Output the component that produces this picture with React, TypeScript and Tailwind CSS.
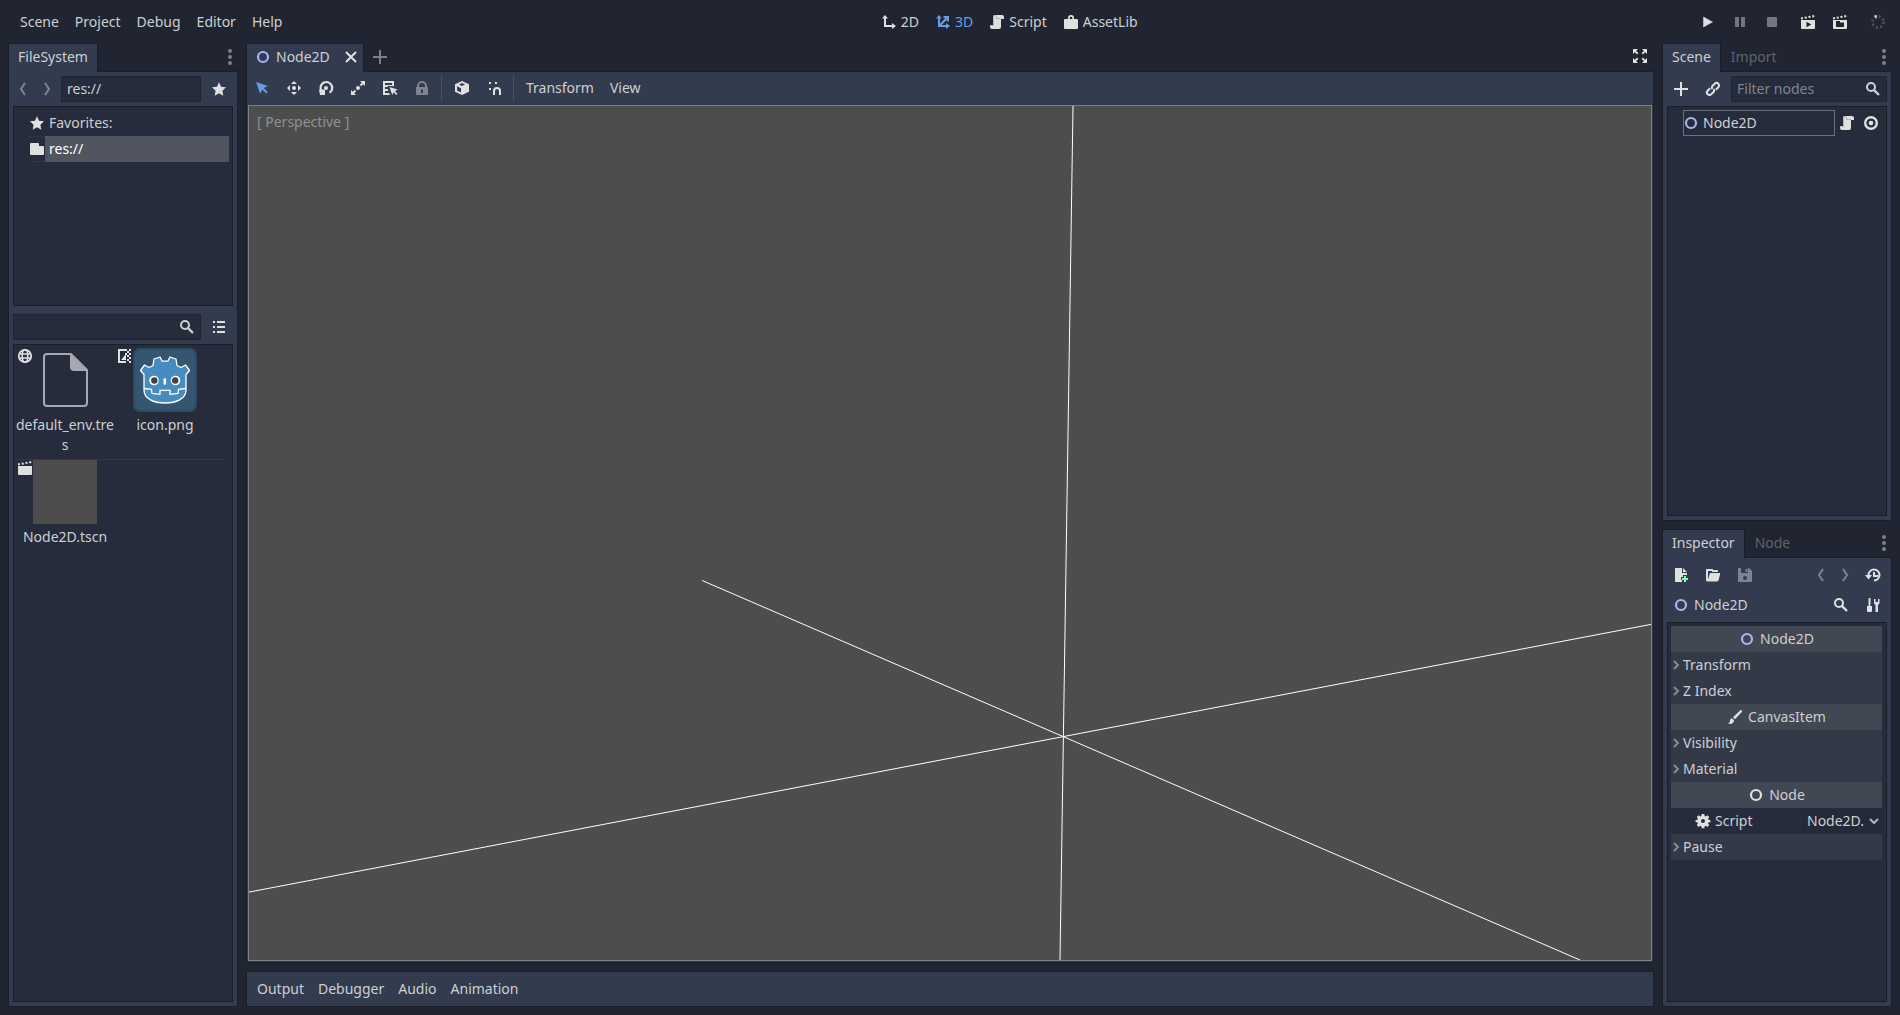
import React, { useState } from "react";
import { clsx } from "clsx";

interface IconProps {
  children: React.ReactNode;
  className?: string;
}

/** Every editor icon lives on a 16px grid and inherits the text colour. */
function Icon({ children, className }: IconProps): React.ReactElement {
  return (
    <svg
      viewBox="0 0 16 16"
      fill="currentColor"
      aria-hidden="true"
      className={clsx("h-4 w-4 shrink-0", className)}
    >
      {children}
    </svg>
  );
}

const STROKE = { fill: "none", stroke: "currentColor", strokeWidth: 2 } as const;

const SLATE_TOP =
  "M14 1l-2 .4.4 2 2-.4zM10.3 1.7l-2 .3.4 2 2-.3zM6.5 2.4l-2 .3.4 2 2-.3zM2.8 3l-2 .4.4 2 2-.4z";

const SHAPES = {
  ring: <circle cx="8" cy="8" r="5" {...STROKE} strokeWidth={2.2} />,
  close: <path d="M3 3l10 10M13 3L3 13" {...STROKE} />,
  plus: <path d="M7 1v6H1v2h6v6h2V9h6V7H9V1z" />,
  dots: (
    <>
      <circle cx="8" cy="2" r="2" />
      <circle cx="8" cy="8" r="2" />
      <circle cx="8" cy="14" r="2" />
    </>
  ),
  back: <path d="M10 2L6 8l4 6" {...STROKE} />,
  forward: <path d="M6 2l4 6-4 6" {...STROKE} />,
  star: <path d="M8 1.2l2 4.5 5 .6-3.6 3.4.9 5L8 12.3l-4.3 2.4.9-5L1 6.300l5-.6z" />,
  folder: <path d="M2 2a1 1 0 0 0-1 1v10a1 1 0 0 0 1 1h12a1 1 0 0 0 1-1V6a1 1 0 0 0-1-1h-4V3a1 1 0 0 0-1-1z" />,
  search: (
    <>
      <circle cx="6" cy="6" r="4" {...STROKE} />
      <path d="M8.8 8.8L14 14" {...STROKE} strokeWidth={2.4} />
    </>
  ),
  list: <path d="M2 2v2h2V2zm4 0v2h8V2zM2 7v2h2V7zm4 0v2h8V7zM2 12v2h2v-2zm4 0v2h8v-2z" />,
  view2d: <path d="M4 1L1 4.5h2V13h8v2l4-3-4-3v2H5V4.5h2z" />,
  view3d: <path d="M4 1L1 4.5h2V13h8v2l4-3-4-3v2H6.6L12 5.7V7.5h2V2H8.5v2h1.9L5 9.4V4.5h2z" />,
  script: (
    <>
      <path d="M6 1a2 2 0 0 0-2 2v8H1v2a2 2 0 0 0 2 2h7a2 2 0 0 0 2-2V5h3V3a2 2 0 0 0-2-2z" />
      <path d="M6 1a2 2 0 0 0-2 2v8H1v1h4V3a1 1 0 0 1 2 0v2h5V4H8V3a2 2 0 0 0-2-2z" fill="#b4b4b4" />
    </>
  ),
  assetLib: (
    <path
      fillRule="evenodd"
      d="M8 1a3 3 0 0 0-3 3v1H2a1 1 0 0 0-1 1v8a1 1 0 0 0 1 1h12a1 1 0 0 0 1-1V6a1 1 0 0 0-1-1h-3V4a3 3 0 0 0-3-3zm0 1.700A1.300 1.300 0 0 1 9.300 4v1H6.700V4A1.300 1.300 0 0 1 8 2.700z"
    />
  ),
  play: <path d="M3.500 3v10l9-5z" strokeLinejoin="round" stroke="currentColor" strokeWidth="0.5" />,
  pause: <path d="M3 3h4v10H3zM9 3h4v10H9z" />,
  stop: <rect x="3" y="3" width="10" height="10" rx="1" />,
  playScene: (
    <>
      <path d={SLATE_TOP} />
      <path fillRule="evenodd" d="M1 6v8a1 1 0 0 0 1 1h12a1 1 0 0 0 1-1V6zm5.500 1.700l4.800 2.800-4.800 2.800z" />
    </>
  ),
  playCustom: (
    <>
      <path d={SLATE_TOP} />
      <path fillRule="evenodd" d="M1 6v8a1 1 0 0 0 1 1h12a1 1 0 0 0 1-1V6zm3 1h4v1.500h4V13H4z" />
    </>
  ),
  clapper: (
    <>
      <path d={SLATE_TOP} />
      <path d="M1 6v8a1 1 0 0 0 1 1h12a1 1 0 0 0 1-1V6z" />
    </>
  ),
  spinner: (
    <>
      <circle cx="8" cy="8" r="5.500" {...STROKE} strokeWidth={3} strokeDasharray="2 2.320" opacity="0.22" />
      <path d="M4 1.700l2.500-1 .3 3.300-1 .5z" />
    </>
  ),
  expand: (
    <path d="M1 1v5l1.800-1.800L5 6.400 6.400 5 4.200 2.800 6 1zm9 0l1.800 1.800L9.600 5 11 6.400l2.200-2.200L15 6V1zM5 9.600l-2.200 2.200L1 10v5h5l-1.800-1.800L6.400 11zm6 0L9.600 11l2.200 2.200L10 15h5v-5l-1.800 1.800z" />
  ),
  select: <path d="M2 2l4.200 11.800 2.100-4.300 4 4 1.400-1.400-4-4L14 6z" />,
  move: (
    <>
      <path d="M8 1L5 4h6zM8 15l-3-3h6zM1 8l3-3v6zM15 8l-3-3v6z" />
      <circle cx="8" cy="8" r="2" />
    </>
  ),
  rotate: (
    <>
      <path d="M3.200 10.500A5.800 5.800 0 1 1 11.500 12.700" {...STROKE} strokeWidth={2.200} />
      <path d="M1 9.500h6V15H2z" />
      <circle cx="8" cy="8" r="2" />
    </>
  ),
  scale: (
    <>
      <path d="M10 1l1.800 1.800-2 2 1.400 1.400 2-2L15 6V1zM1 10v5h5l-1.800-1.800 2-2-1.400-1.400-2 2z" />
      <circle cx="8" cy="8" r="2" />
    </>
  ),
  listSelect: (
    <>
      <path d="M1 1v14h7l-.8-2H3v-2h3.400L5.700 9H3V7h2.500L6 6h4.500L12 6.500V1zm2 2h7v2H3z" fillRule="evenodd" />
      <path d="M7.500 7l2.700 8 1.500-2.700 2.600 2.700 1.200-1.200-2.600-2.600L15.700 9.600z" />
    </>
  ),
  lock: (
    <path
      fillRule="evenodd"
      d="M8 1a5 5 0 0 0-5 5v1H2v7a1 1 0 0 0 1 1h10a1 1 0 0 0 1-1V7h-1V6a5 5 0 0 0-5-5zm0 2a3 3 0 0 1 3 3v1H5V6a3 3 0 0 1 3-3zM7 9.500h2V13H7z"
    />
  ),
  cube: (
    <path
      fillRule="evenodd"
      d="M8 .9L1 4.200v7.600l7 3.300 7-3.300V4.200zM8 3.100l3 1.400-3 1.500-3-1.500zM3 6.300l4 1.900v4.300l-4-1.900z"
    />
  ),
  snap: (
    <>
      <path d="M3 2h2v2H3zM9 2h2v2H9zM3 8h2v2H3z" />
      <path d="M8 15v-4a3 3 0 0 1 6 0v4" {...STROKE} />
    </>
  ),
  link: (
    <g transform="rotate(-45 8 8)" {...STROKE}>
      <path d="M6.500 5.500H3a2.500 2.500 0 0 0 0 5h3a2.500 2.500 0 0 0 2.400-2" />
      <path d="M9.500 10.500H13a2.500 2.500 0 0 0 0-5h-3a2.500 2.500 0 0 0-2.400 2" />
    </g>
  ),
  eye: (
    <>
      <circle cx="8" cy="8" r="5.800" {...STROKE} strokeWidth={2.400} />
      <circle cx="8" cy="8" r="2.300" />
    </>
  ),
  fileNew: (
    <>
      <path d="M2 1v14h7v-2H8v-3h2V8h4V6H9V1z" />
      <path d="M10 1v4h4z" />
      <path d="M11 9v2H9v2h2v2h2v-2h2v-2h-2V9z" fill="#84ffb1" />
    </>
  ),
  load: (
    <path d="M2 2a1 1 0 0 0-1 1v10a1.500 1.500 0 0 0 1.500 1.500H12l1.500-1L15 7.500V6H5L3 12.500V4h4v1h6V4a1 1 0 0 0-1-1H8V2z" />
  ),
  save: (
    <path
      fillRule="evenodd"
      d="M1 2v12a1 1 0 0 0 1 1h12a1 1 0 0 0 1-1V4l-3-3H2a1 1 0 0 0-1 1zm3-1h7v5H4zm4 8a2 2 0 1 1 0 4 2 2 0 0 1 0-4zM8.500 2h2v3h-2z"
    />
  ),
  history: (
    <>
      <path d="M3.500 8A5.500 5.500 0 1 1 9 13.500" {...STROKE} />
      <path d="M0 8h7l-3.500 4.500zM8 5h2v3h3v2H8z" />
    </>
  ),
  tools: (
    <path d="M4 1h1.500v6h-.2v2H7v5a1 1 0 0 1-1 1H3a1 1 0 0 1-1-1V9h1.500V2zM9 2v3.500A2.500 2.500 0 0 0 10.500 8v7h2.500V8a2.500 2.500 0 0 0 1.500-2.500V2H13v3h-2.500V2z" />
  ),
  brush: (
    <path d="M14.800 1.200c-.5-.5-1.200-.3-1.800.3L6 8.200 8 10.200l6.500-7c.6-.7.800-1.500.3-2zM5 9.200a2.500 2.500 0 0 0-2 2.300C3 13 2 14 1 14.500c2.500 1 6 .2 6-3.300z" />
  ),
  gear: (
    <path
      fillRule="evenodd"
      d="M6.700 1h2.600l.4 2 1 .4 1.700-1.100 1.800 1.800-1.100 1.700.4 1 2 .4v1.800l-2 .4-.4 1 1.100 1.700-1.800 1.800-1.700-1.100-1 .4-.4 2H6.700l-.4-2-1-.4-1.700 1.100-1.800-1.800 1.100-1.700-.4-1-2-.4V7.200l2-.4.4-1-1.100-1.700 1.800-1.800 1.700 1.100 1-.4zM8 6a2 2 0 1 0 0 4 2 2 0 0 0 0-4z"
    />
  ),
  sectionArrow: <path d="M6 4l4 4-4 4" {...STROKE} />,
  chevronDown: <path d="M4 6l4 4 4-4" {...STROKE} />,
  globe: (
    <>
      <circle cx="8" cy="8" r="6.200" {...STROKE} strokeWidth={1.800} />
      <ellipse cx="8" cy="8" rx="2.800" ry="6.200" {...STROKE} strokeWidth={1.600} />
      <path d="M2 6h12M2 10h12" {...STROKE} strokeWidth={1.600} />
    </>
  ),
  texture: (
    <>
      <path d="M1 1v14h8v-2H3V3h5V1z" />
      <path d="M4 12l5-6v6zM8 1h2v2H8zM12 1h2v2h-2zM10 3h2v2h-2zM12 5h2v2h-2zM8 5h2v2H8zM10 7h2v2h-2zM12 9h2v2h-2zM10 11h2v2h-2zM12 13h2v2h-2z" />
    </>
  ),
};

type IconName = keyof typeof SHAPES;

interface IconButtonProps {
  icon: IconName;
  label: string;
  narrow?: boolean;
  className?: string;
}

function IconButton({ icon, label, narrow, className }: IconButtonProps): React.ReactElement {
  return (
    <button
      type="button"
      aria-label={label}
      title={label}
      className={clsx(
        "flex h-[26px] shrink-0 items-center justify-center",
        narrow ? "w-5" : "w-7",
        className ?? "text-[#e0e0e0]",
      )}
    >
      <Icon>{SHAPES[icon]}</Icon>
    </button>
  );
}

function TextButton({ children }: { children: string }): React.ReactElement {
  return (
    <button type="button" className="h-[26px] px-[6px]">
      {children}
    </button>
  );
}

interface DockProps {
  tabs: string[];
  className?: string;
  children: React.ReactNode;
}

/** Dock with a tab strip; the open tab overlaps the panel's top border. */
function Dock({ tabs, className, children }: DockProps): React.ReactElement {
  const [active, setActive] = useState(tabs[0]);
  return (
    <section className={clsx("flex min-h-0 flex-col", className)}>
      <div className="flex h-7 shrink-0 items-stretch" role="tablist">
        {tabs.map((tab) => (
          <button
            key={tab}
            type="button"
            role="tab"
            aria-selected={tab === active}
            onClick={() => setActive(tab)}
            className={clsx(
              "z-10 -mb-px border border-b-0 px-[9px] pb-[2px]",
              tab === active
                ? "border-[#191e28] bg-[#333b4f]"
                : "border-transparent text-[#5d636d]",
            )}
          >
            {tab}
          </button>
        ))}
        <button type="button" aria-label="Dock menu" className="ml-auto text-[#7c8088]">
          <Icon>{SHAPES.dots}</Icon>
        </button>
      </div>
      <div className="flex min-h-0 flex-1 flex-col gap-1 border border-[#191e28] bg-[#333b4f] p-1">
        {children}
      </div>
    </section>
  );
}

function Inset({ className, children }: { className?: string; children?: React.ReactNode }) {
  return (
    <div className={clsx("min-h-0 border border-[#191e28] bg-[#262c3b]", className)}>{children}</div>
  );
}

const FIELD =
  "block h-[26px] w-full min-w-0 border border-[#202531] bg-[#262c3b] pb-px pl-[5px] leading-5 text-[#cdcfd2] outline-none placeholder:text-[#7f848e]";

function SearchField({ label, placeholder }: { label: string; placeholder?: string }) {
  return (
    <div className="relative min-w-0 flex-1">
      <input type="text" aria-label={label} placeholder={placeholder} className={clsx(FIELD, "pr-7")} />
      <Icon className="absolute top-[5px] right-[6px] text-[#cdcfd2]">{SHAPES.search}</Icon>
    </div>
  );
}

function GodotLogo(): React.ReactElement {
  return (
    <svg viewBox="0 0 64 64" className="h-16 w-16" role="img" aria-label="icon.png">
      <rect x="1" y="1" width="62" height="62" rx="6" fill="#355570" stroke="#2c4c64" strokeWidth="2" />
      <path
        d="M20 17.500l1-6.500 6-2 2.200 4.200h5.600L37 9l6 2 1 6.500 4 2 4.500-2.500 4 5.500-3.500 4V42c0 9-10 13-21 13S11 51 11 42V26.500l-3.500-4 4-5.500L16 19.500z"
        fill="#478cbf"
        stroke="#fff"
        strokeWidth="1.300"
        strokeLinejoin="round"
      />
      <path
        d="M11 40.500l7.500.8.5 4.200 8 .8v-4h10v4l8-.8.5-4.200 7.500-.8"
        fill="none"
        stroke="#fff"
        strokeWidth="1.300"
      />
      <circle cx="21" cy="32.500" r="4.800" fill="#fff" />
      <circle cx="42.500" cy="32.500" r="4.800" fill="#fff" />
      <circle cx="21.300" cy="32.500" r="3.200" fill="#414042" />
      <circle cx="42.200" cy="32.500" r="3.200" fill="#414042" />
      <path d="M31.800 31.500v4" stroke="#fff" strokeWidth="2.600" strokeLinecap="round" />
    </svg>
  );
}

function BlankFile(): React.ReactElement {
  return (
    <svg viewBox="0 0 64 64" className="h-16 w-16" aria-hidden="true">
      <path
        d="M14 6h24l16 16v33a3 3 0 0 1-3 3H14a3 3 0 0 1-3-3V9a3 3 0 0 1 3-3z"
        fill="none"
        stroke="#a6a9b0"
        strokeWidth="2"
      />
      <path d="M37 5.500V19a4 4 0 0 0 4 4h13z" fill="#a6a9b0" />
    </svg>
  );
}

const FILES: { name: string; icon: IconName; preview: React.ReactNode }[] = [
  { name: "default_env.tres", icon: "globe", preview: <BlankFile /> },
  { name: "icon.png", icon: "texture", preview: <GodotLogo /> },
  { name: "Node2D.tscn", icon: "clapper", preview: <div className="h-16 w-16 bg-[#4d4d4d]" /> },
];

function FileItem({ name, icon, preview }: (typeof FILES)[number]): React.ReactElement {
  return (
    <button type="button" className="relative flex w-[100px] flex-col items-center gap-[3px]">
      <Icon className="absolute top-0 left-[2px] text-[#e0e0e0]">{SHAPES[icon]}</Icon>
      {preview}
      <span className="w-full text-center break-all">{name}</span>
    </button>
  );
}

function FileSystemDock(): React.ReactElement {
  return (
    <Dock tabs={["FileSystem"]} className="w-[230px] shrink-0">
      <div className="flex gap-1">
        <IconButton icon="back" label="Previous" narrow className="text-[#7f8490]" />
        <IconButton icon="forward" label="Next" narrow className="text-[#7f8490]" />
        <input type="text" aria-label="Path" defaultValue="res://" className={clsx(FIELD, "flex-1")} />
        <IconButton icon="star" label="Favorite" />
      </div>
      <Inset className="h-[200px] shrink-0 py-[3px] pr-[3px] pl-[15px]">
        <ul>
          <li className="flex h-[26px] items-center gap-1">
            <Icon className="text-[#e0e0e0]">{SHAPES.star}</Icon>
            Favorites:
          </li>
          <li className="flex h-[26px] items-center border-y border-[#2f3542] text-white">
            <Icon className="text-[#e0e0e0]">{SHAPES.folder}</Icon>
            <span className="flex h-[26px] flex-1 items-center bg-[#51555f] pl-1">res://</span>
          </li>
        </ul>
      </Inset>
      <div className="mt-1 flex gap-1">
        <SearchField label="Search files" />
        <IconButton icon="list" label="Toggle display mode" />
      </div>
      <Inset className="flex-1 py-[3px] pr-[7px] pl-px">
        <div className="flex h-28 border-b border-[#333947]">
          <FileItem {...FILES[0]} />
          <FileItem {...FILES[1]} />
        </div>
        <FileItem {...FILES[2]} />
      </Inset>
    </Dock>
  );
}

const TOOLS: { icon: IconName; label: string }[] = [
  { icon: "move", label: "Move Mode" },
  { icon: "rotate", label: "Rotate Mode" },
  { icon: "scale", label: "Scale Mode" },
  { icon: "listSelect", label: "Select from list" },
];

function Separator(): React.ReactElement {
  return <div className="mr-[2px] ml-px h-[26px] w-px bg-[#4b5263]" />;
}

function Viewport(): React.ReactElement {
  return (
    <div className="relative min-h-0 flex-1 overflow-hidden border border-[#7a7f8a] bg-[#4d4d4d]">
      <svg
        viewBox="0 0 1402 855"
        preserveAspectRatio="none"
        className="absolute inset-0 h-full w-full"
        stroke="#fff"
        strokeWidth="1"
        shapeRendering="crispEdges"
        aria-hidden="true"
      >
        <path d="M824 0L811 855M453 475L1331 855M0 787L1402 519" fill="none" />
      </svg>
      <button type="button" className="absolute top-[6px] left-2 text-[#909090]">
        [ Perspective ]
      </button>
    </div>
  );
}

function MainEditor(): React.ReactElement {
  return (
    <main className="flex min-w-0 flex-1 flex-col gap-2">
      <section className="flex min-h-0 flex-1 flex-col">
        <div className="flex h-7 shrink-0 items-stretch">
          <div className="z-10 -mb-px flex items-center gap-[5px] border border-b-0 border-[#191e28] bg-[#333b4f] pr-1 pb-[2px] pl-2">
            <Icon className="text-[#a5b7f3]">{SHAPES.ring}</Icon>
            <span>Node2D</span>
            <button type="button" aria-label="Close scene" className="ml-2 text-[#e0e0e0]">
              <Icon>{SHAPES.close}</Icon>
            </button>
          </div>
          <button type="button" aria-label="Add a new scene" className="ml-2 text-[#7c8088]">
            <Icon>{SHAPES.plus}</Icon>
          </button>
          <IconButton icon="expand" label="Distraction free mode" className="ml-auto text-[#e0e0e0]" />
        </div>
        <div className="flex min-h-0 flex-1 flex-col border border-[#191e28] bg-[#333b4f] p-px pt-[3px]">
          <div className="mb-1 flex items-center gap-1">
            <IconButton icon="select" label="Select Mode" className="text-[#699ce8]" />
            {TOOLS.map((t) => (
              <IconButton key={t.label} {...t} />
            ))}
            <IconButton icon="lock" label="Lock" className="text-[#7f8490]" />
            <Separator />
            <IconButton icon="cube" label="Use local space" />
            <IconButton icon="snap" label="Use snap" />
            <Separator />
            <TextButton>Transform</TextButton>
            <TextButton>View</TextButton>
          </div>
          <Viewport />
        </div>
      </section>
      <div className="flex h-9 shrink-0 items-center gap-[2px] border border-[#191e28] bg-[#333b4f] px-1">
        {["Output", "Debugger", "Audio", "Animation"].map((name) => (
          <TextButton key={name}>{name}</TextButton>
        ))}
      </div>
    </main>
  );
}

function SceneDock(): React.ReactElement {
  return (
    <Dock tabs={["Scene", "Import"]} className="h-[478px] shrink-0">
      <div className="flex gap-1">
        <IconButton icon="plus" label="Add node" />
        <IconButton icon="link" label="Instance scene" />
        <SearchField label="Filter nodes" placeholder="Filter nodes" />
      </div>
      <Inset className="flex-1 py-[3px] pr-[7px] pl-[15px]">
        <div className="flex items-center gap-1">
          <div className="flex h-[26px] flex-1 items-center gap-1 border border-[#6b7080]">
            <Icon className="-ml-px text-[#a5b7f3]">{SHAPES.ring}</Icon>
            Node2D
          </div>
          <button type="button" aria-label="Open script" className="text-[#e0e0e0]">
            <Icon>{SHAPES.script}</Icon>
          </button>
          <button type="button" aria-label="Toggle visibility" className="ml-1 text-[#e0e0e0]">
            <Icon>{SHAPES.eye}</Icon>
          </button>
        </div>
      </Inset>
    </Dock>
  );
}

interface CategoryProps {
  icon: IconName;
  name: string;
  tint?: string;
}

function Category({ icon, name, tint = "text-[#e0e0e0]" }: CategoryProps): React.ReactElement {
  return (
    <h3 className="flex h-[26px] items-center justify-center gap-[5px] bg-[#424754]">
      <Icon className={tint}>{SHAPES[icon]}</Icon>
      {name}
    </h3>
  );
}

function Section({ name }: { name: string }): React.ReactElement {
  return (
    <button type="button" className="flex h-[26px] w-full items-center bg-[#343947]">
      <Icon className="-mr-px -ml-[3px] text-[#888c94]">{SHAPES.sectionArrow}</Icon>
      {name}
    </button>
  );
}

function InspectorDock(): React.ReactElement {
  return (
    <Dock tabs={["Inspector", "Node"]} className="flex-1">
      <div className="flex gap-1">
        <IconButton icon="fileNew" label="New resource" />
        <IconButton icon="load" label="Load resource" />
        <IconButton icon="save" label="Save resource" className="text-[#7f8490]" />
        <IconButton icon="back" label="Previous object" narrow className="ml-auto text-[#7f8490]" />
        <IconButton icon="forward" label="Next object" narrow className="text-[#7f8490]" />
        <IconButton icon="history" label="History" />
      </div>
      <div className="flex items-center gap-1">
        <button type="button" className="mr-auto flex h-[26px] items-center gap-[5px] pl-[6px]">
          <Icon className="text-[#a5b7f3]">{SHAPES.ring}</Icon>
          Node2D
        </button>
        <IconButton icon="search" label="Filter properties" />
        <IconButton icon="tools" label="Object properties" />
      </div>
      <Inset className="flex-1 p-[3px] pr-1">
        <Category icon="ring" name="Node2D" tint="text-[#a5b7f3]" />
        <Section name="Transform" />
        <Section name="Z Index" />
        <Category icon="brush" name="CanvasItem" />
        <Section name="Visibility" />
        <Section name="Material" />
        <Category icon="ring" name="Node" />
        <div className="flex h-[26px] items-center gap-1 pl-6">
          <Icon className="text-[#e0e0e0]">{SHAPES.gear}</Icon>
          Script
          <button
            type="button"
            aria-label="Script Node2D."
            className="ml-auto flex h-[26px] w-20 items-center justify-between bg-[#242a38] pl-[5px]"
          >
            Node2D.
            <Icon className="text-[#b4b7bc]">{SHAPES.chevronDown}</Icon>
          </button>
        </div>
        <Section name="Pause" />
      </Inset>
    </Dock>
  );
}

const WORKSPACES: { name: string; icon: IconName }[] = [
  { name: "2D", icon: "view2d" },
  { name: "3D", icon: "view3d" },
  { name: "Script", icon: "script" },
  { name: "AssetLib", icon: "assetLib" },
];

function TopBar(): React.ReactElement {
  const [workspace, setWorkspace] = useState("3D");
  return (
    <header className="flex h-[43px] shrink-0 items-center justify-between pr-2 pl-[14px]">
      <nav className="flex gap-1 pr-9">
        {["Scene", "Project", "Debug", "Editor", "Help"].map((name) => (
          <TextButton key={name}>{name}</TextButton>
        ))}
      </nav>
      <div className="flex gap-1">
        {WORKSPACES.map(({ name, icon }) => (
          <button
            key={name}
            type="button"
            onClick={() => setWorkspace(name)}
            className={clsx(
              "flex h-[26px] items-center gap-1 px-[6px]",
              name === workspace && "text-[#699ce8]",
            )}
          >
            <Icon className={clsx(name !== workspace && "text-[#e0e0e0]")}>{SHAPES[icon]}</Icon>
            {name}
          </button>
        ))}
      </div>
      <div className="flex gap-1">
        <IconButton icon="play" label="Play" />
        <IconButton icon="pause" label="Pause" className="text-[#72767d]" />
        <IconButton icon="stop" label="Stop" className="text-[#72767d]" />
        <IconButton icon="playScene" label="Play scene" className="ml-1 text-[#e0e0e0]" />
        <IconButton icon="playCustom" label="Play custom scene" />
        <IconButton icon="spinner" label="Update spinner" className="ml-[6px] text-[#e0e0e0]" />
      </div>
    </header>
  );
}

export default function App(): React.ReactElement {
  return (
    <div className="flex h-screen flex-col overflow-hidden bg-[#202531] font-['Noto_Sans',sans-serif] text-[14px] leading-5 text-[#cdcfd2]">
      <TopBar />
      <div className="flex min-h-0 flex-1 gap-2 px-2 pb-2">
        <FileSystemDock />
        <MainEditor />
        <aside className="flex w-[230px] shrink-0 flex-col gap-2">
          <SceneDock />
          <InspectorDock />
        </aside>
      </div>
    </div>
  );
}
